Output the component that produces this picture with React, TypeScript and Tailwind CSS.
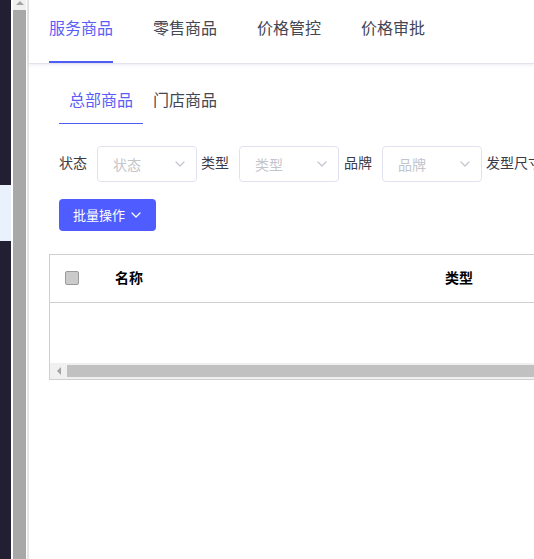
import React from 'react';

const font = { fontFamily: '"Noto Sans CJK SC", "Noto Sans", sans-serif' };

const Chevron = ({ className = '' }: { className?: string }) => (
  <svg width="12" height="12" viewBox="0 0 12 12" fill="none" className={className}>
    <path d="M2 4l4 4 4-4" stroke="currentColor" strokeWidth="1.2" strokeLinecap="round" strokeLinejoin="round" />
  </svg>
);

const Select = ({ placeholder }: { placeholder: string }) => (
  <div className="flex h-[36px] w-[100px] shrink-0 items-center justify-between rounded-[4px] border border-[#e2e2ef] pl-[15px] pr-[10px] text-[14px] text-[#c3c5cc]">
    <span>{placeholder}</span>
    <Chevron className="text-[#c3c5cc]" />
  </div>
);

export default function App() {
  const tabs = ['服务商品', '零售商品', '价格管控', '价格审批'];
  return (
    <div className="flex h-[559px] w-[534px] overflow-hidden bg-white" style={font}>
      {/* left sliver of outer app */}
      <div className="flex w-[11px] shrink-0 flex-col bg-[#221f33]">
        <div className="mt-[185px] h-[56px] bg-[#e8f1fc]" />
      </div>
      <div className="w-[2px] shrink-0 bg-white" />
      {/* scrollbar */}
      <div className="flex w-[13px] shrink-0 flex-col bg-[#f0f0f0]">
        <div className="flex h-[10px] items-start justify-center pt-[1px]">
          <div className="h-0 w-0 border-x-[4px] border-b-[4px] border-x-transparent border-b-[#a3a3a3]" />
        </div>
        <div className="flex-1 bg-[#a8a8a8]" />
      </div>
      <div className="w-[1px] shrink-0 bg-white" />
      <div className="w-[2px] shrink-0 bg-[#e6e6e6]" />

      <div className="flex min-w-0 flex-1 flex-col">
        {/* top tabs */}
        <div className="flex h-[64px] shrink-0 items-stretch border-b border-[#e3e3ef] pl-[20px] shadow-[0_1px_3px_rgba(120,120,170,0.15)]">
          {tabs.map((t, i) => (
            <div
              key={t}
              className={`mr-[40px] flex shrink-0 items-center border-b-2 pb-[7px] text-[16px] ${
                i === 0 ? 'border-[#4f5df5] text-[#5a5ef6]' : 'border-transparent text-[#444654]'
              }`}
            >
              {t}
            </div>
          ))}
        </div>

        <div className="flex flex-col px-[20px]">
          {/* sub tabs */}
          <div className="flex h-[60px] items-stretch pl-[10px] pt-[15px]">
            <div className="flex items-center border-b border-[#4f5df5] px-[10px] pb-[5px] text-[16px] text-[#5a5ef6]">总部商品</div>
            <div className="flex items-center px-[10px] pb-[5px] text-[16px] text-[#444654]">门店商品</div>
          </div>

          {/* filters */}
          <div className="mt-[22px] flex items-center pl-[10px] text-[14px] text-[#3a3a48] whitespace-nowrap">
            <span className="mr-[10px] pb-[3px]">状态</span>
            <Select placeholder="状态" />
            <span className="ml-[4px] mr-[10px] pb-[3px]">类型</span>
            <Select placeholder="类型" />
            <span className="ml-[5px] mr-[10px] pb-[3px]">品牌</span>
            <Select placeholder="品牌" />
            <span className="ml-[4px] pb-[3px]">发型尺寸</span>
          </div>

          <div className="mt-[17px] pl-[10px]">
            <button className="flex h-[32px] w-[97px] items-center justify-center gap-[5px] rounded-[4px] bg-[#4f5cff] text-[13px] text-white">
              批量操作
              <Chevron className="text-white" />
            </button>
          </div>

          {/* table */}
          <div className="mt-[23px] mr-[-20px] border border-r-0 border-[#cfcfcf]">
            <div className="flex h-[48px] items-center border-b border-[#cfcfcf] pb-[2px] text-[14px] font-bold text-black">
              <div className="ml-[15px] h-[14px] w-[14px] rounded-[2px] border border-[#9a9a9a] bg-[#cbcbcb]" />
              <span className="ml-[36px] w-[330px] shrink-0">名称</span>
              <span>类型</span>
            </div>
            <div className="h-[60px]" />
            <div className="flex h-[16px] items-center bg-[#f0f0f0]">
              <div className="flex w-[17px] items-center justify-center">
                <div className="h-0 w-0 border-y-[4px] border-r-[4px] border-y-transparent border-r-[#a3a3a3]" />
              </div>
              <div className="h-[12px] flex-1 bg-[#c1c1c1]" />
            </div>
          </div>
        </div>
      </div>
    </div>
  );
}
